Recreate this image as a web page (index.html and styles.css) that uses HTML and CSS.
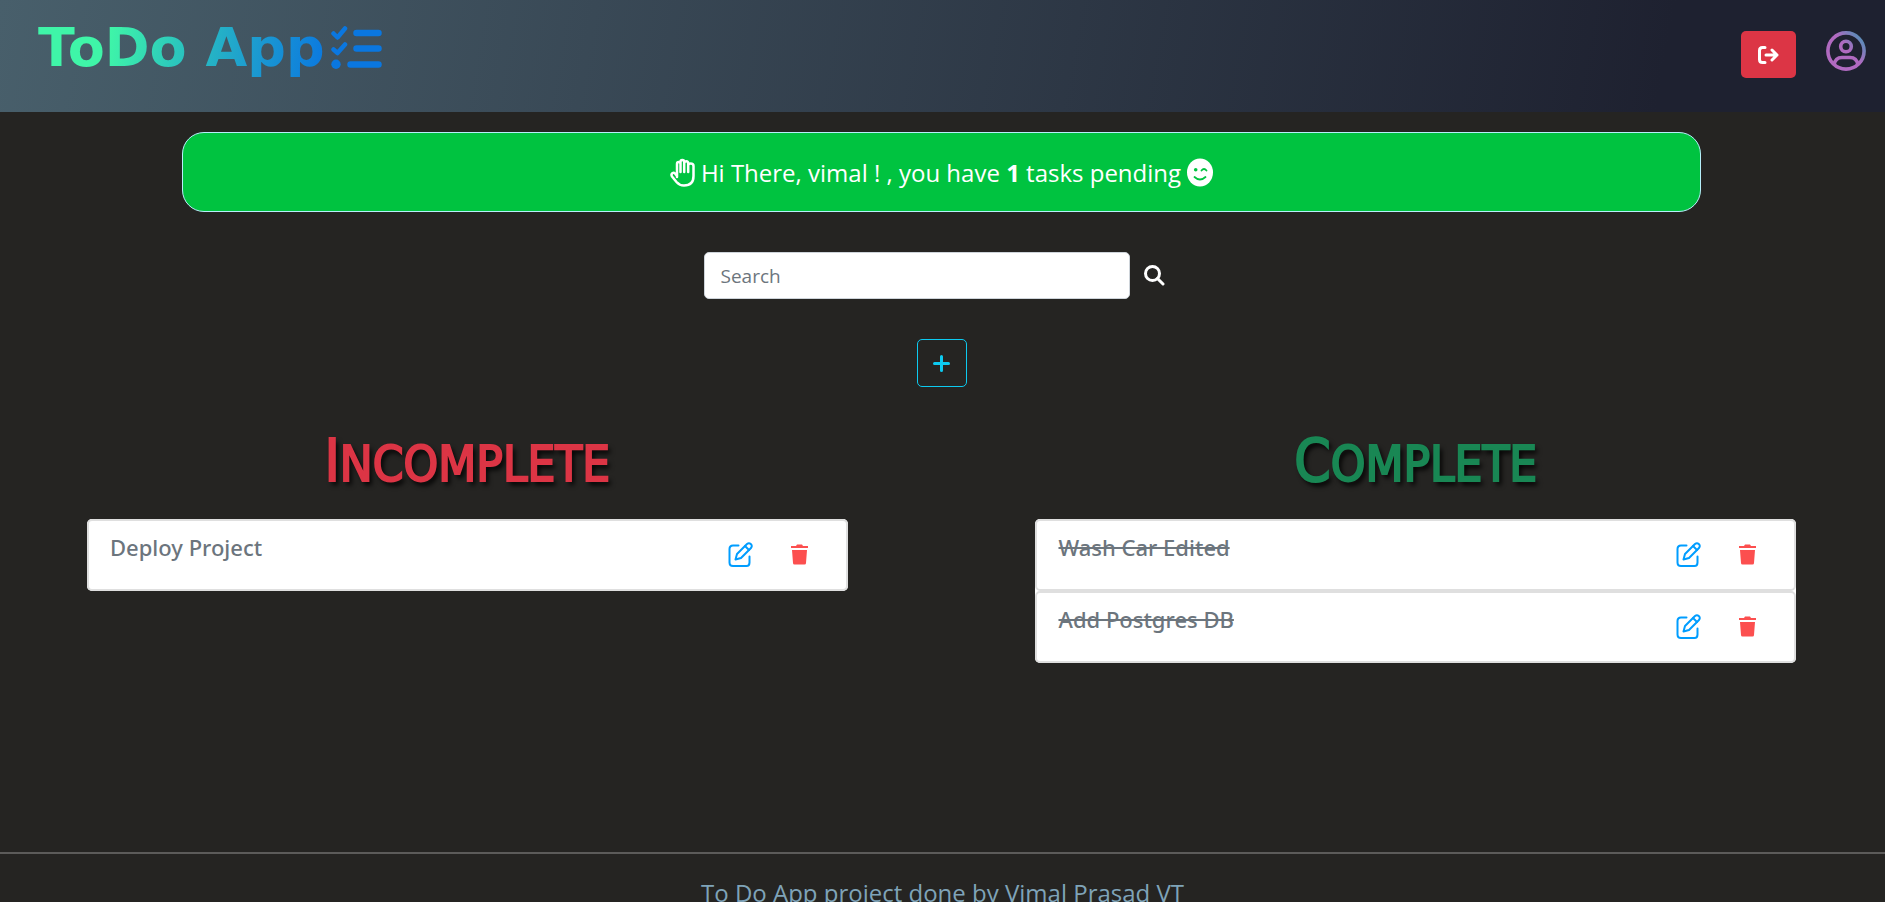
FILE: index.html
```html
<!DOCTYPE html>
<html lang="en">
<head>
<meta charset="utf-8">
<title>ToDo App</title>
<link rel="stylesheet" href="styles.css">
</head>
<body>
<svg class="sprite" aria-hidden="true">
  <symbol id="edit" viewBox="0 0 25 25">
    <g fill="none" stroke="currentColor" stroke-width="2" stroke-linecap="round" stroke-linejoin="round">
      <path d="M10.500 3.500H5Q1.500 3.500 1.500 7V20.500Q1.500 24 5 24H18.500Q21.500 24 21.500 20.500V14.500"/>
      <path d="M7.500 17.500L9 12L19 2Q21 .500 23 2.200Q24.500 4 23 6L13 16Z"/>
      <path d="M17 4L21 8"/>
    </g>
  </symbol>
  <symbol id="trash" viewBox="0 0 17 21">
    <path fill="currentColor" d="M0 2H5L6 .500H11L12 2H17V4H0ZM1 6H16L15 19Q15 20.500 13.500 20.500H3.500Q2 20.500 2 19Z"/>
  </symbol>
</svg>

<header class="navbar">
  <a class="brand" href="#"><span class="brand-text">ToDo App</span><svg class="brand-icon" viewBox="0 0 51 43" aria-hidden="true">
    <g fill="none" stroke="#0a77e0" stroke-linecap="round" stroke-linejoin="round">
      <path stroke-width="4.500" d="M2.500 7.500L6.500 11.500L14 2.500M2.500 23.500L6.500 27L14 18.500"/>
      <path stroke-width="6.500" d="M25.500 7H47.500M25.500 22.500H47.500M19.500 38.500H47.500"/>
    </g>
    <circle cx="5" cy="38.300" r="4.700" fill="#0a77e0"/>
  </svg></a>
  <div class="nav-actions">
    <button class="logout" type="button" aria-label="Log out">
      <svg width="21" height="18" viewBox="0 0 21 18" fill="none" stroke="#fff" stroke-width="3" stroke-linecap="round" stroke-linejoin="round"><path d="M7 1.500H4.500Q1.500 1.500 1.500 4.500V13.500Q1.500 16.500 4.500 16.500H7M8 9H19M14 4L19 9L14 14"/></svg>
    </button>
    <a class="profile" href="#" aria-label="Profile">
      <svg width="40" height="40" viewBox="0 0 40 40" fill="none" stroke="url(#violet)" stroke-width="3.600">
        <defs><linearGradient id="violet" gradientUnits="userSpaceOnUse" x1="10" y1="30" x2="36" y2="8"><stop offset=".5" stop-color="#b06ac0"/><stop offset="1" stop-color="#5a8cb8"/></linearGradient></defs>
        <circle cx="20" cy="20" r="18.100"/><circle cx="20" cy="15.500" r="5.300"/><path d="M8 34C9 28 13 26.500 16 26.500H24C27 26.500 31 28 32 34"/>
      </svg>
    </a>
  </div>
</header>

<main>
  <p class="banner">
    <svg width="25" height="29" viewBox="0 0 25 29" fill="none" stroke="#fff" stroke-width="2.500" stroke-linecap="round" stroke-linejoin="round" aria-hidden="true"><path d="M7 19V6Q7 4 8.700 4Q10.500 4 10.500 6V4Q10.500 2 12.300 2Q14.200 2 14.200 4V5Q14.500 3.200 16.300 3.200Q18.200 3.200 18.200 5.500V7Q18.700 5.500 20.500 5.500Q23.500 5.500 23.500 8V18Q23.500 27.500 14 27.500Q9.500 27.500 6.500 24L2 18.500Q.800 16.500 2.300 15.200Q3.800 14.200 5 15.500L7 18M10.500 6V14M14.200 5V14M18.200 7V14"/></svg>
    <span>Hi There, vimal ! , you have <strong>1</strong> tasks pending</span>
    <svg width="26" height="29" viewBox="0 0 26 29" aria-hidden="true"><ellipse cx="13" cy="14.500" rx="13" ry="14" fill="#fff"/><circle cx="8.700" cy="11.700" r="1.800" fill="#00c340"/><path d="M14.500 12.500Q17 9.500 19.500 12.500M7.500 19Q13 24 18.500 19" fill="none" stroke="#00c340" stroke-width="1.800" stroke-linecap="round"/></svg>
  </p>

  <form class="search">
    <input type="search" placeholder="Search" aria-label="Search">
    <button type="button" aria-label="Search tasks">
      <svg width="21" height="21" viewBox="0 0 21 21" fill="none" stroke="#fff" stroke-width="3" stroke-linecap="round"><circle cx="8.500" cy="8.500" r="7"/><path d="M13.500 13.500L19 19"/></svg>
    </button>
  </form>

  <button class="add" type="button" aria-label="Add task">
    <svg width="17" height="17" viewBox="0 0 17 17" stroke="#0dcaf0" stroke-width="3" stroke-linecap="round"><path d="M8.500 1.500V15.500M1.500 8.500H15.500"/></svg>
  </button>

  <div class="columns">
    <section>
      <h2 class="incomplete">Incomplete</h2>
      <ul class="tasks">
        <li><span class="task">Deploy Project</span>
          <button class="edit" type="button" aria-label="Edit"><svg width="25" height="25"><use href="#edit"/></svg></button>
          <button class="delete" type="button" aria-label="Delete"><svg width="17" height="21"><use href="#trash"/></svg></button></li>
      </ul>
    </section>
    <section>
      <h2 class="complete">Complete</h2>
      <ul class="tasks">
        <li><span class="task done">Wash Car Edited</span>
          <button class="edit" type="button" aria-label="Edit"><svg width="25" height="25"><use href="#edit"/></svg></button>
          <button class="delete" type="button" aria-label="Delete"><svg width="17" height="21"><use href="#trash"/></svg></button></li>
        <li><span class="task done">Add Postgres DB</span>
          <button class="edit" type="button" aria-label="Edit"><svg width="25" height="25"><use href="#edit"/></svg></button>
          <button class="delete" type="button" aria-label="Delete"><svg width="17" height="21"><use href="#trash"/></svg></button></li>
      </ul>
    </section>
  </div>
</main>

<footer>To Do App project done by Vimal Prasad VT</footer>
</body>
</html>
```

FILE: styles.css
```css
* { box-sizing: border-box; }
body {
  margin: 0;
  height: 100vh;
  overflow: hidden;
  display: flex;
  flex-direction: column;
  background: #252422;
  color: #fff;
  font-family: "Open Sans", "Noto Sans", sans-serif;
}
button { border: 0; padding: 0; background: none; cursor: pointer; }
svg { display: block; flex: none; }
.sprite { position: absolute; width: 0; height: 0; }

.navbar {
  flex: none;
  display: flex;
  justify-content: space-between;
  align-items: flex-start;
  min-height: 112px;
  padding: 16px 19px 0 38px;
  background: linear-gradient(100deg, #485f6b 0%, #1e2130 88%);
}
.brand { display: flex; gap: 6px; text-decoration: none; }
.brand-text {
  font: bold 54px/64px "DejaVu Sans", sans-serif;
  color: transparent;
  background: linear-gradient(100deg, #3ff5a8 25%, #2cc8bc 48%, #1e9fce 72%, #0a77e0 100%);
  background-clip: text;
  -webkit-background-clip: text;
}
.brand-icon { width: 51px; height: 43px; margin-top: 10px; }
.nav-actions { display: flex; gap: 30px; padding-top: 15px; }
.logout {
  display: grid;
  place-items: center;
  width: 55px;
  height: 47px;
  border-radius: 5px;
  background: #dc3545;
}

main { flex: none; padding: 20px 2px 0 0; }
.banner {
  display: flex;
  justify-content: center;
  align-items: center;
  gap: 6px;
  width: calc(83.333% - 50px);
  min-height: 80px;
  margin: 0 auto;
  border: 1px solid #b6effb;
  border-radius: 22px;
  background: #00c340;
  font-size: 24px;
}
.search { display: flex; justify-content: center; margin-top: 40px; }
.search input {
  width: 426px;
  height: 47px;
  padding: 0 16px;
  border: 1px solid #ced4da;
  border-radius: 5px;
  background: #fff;
  font: 19px "Open Sans", sans-serif;
}
.search input::placeholder { color: #6c757d; }
.search button { width: 50px; display: grid; place-items: center; }
.add {
  display: grid;
  place-items: center;
  width: 50px;
  height: 48px;
  margin: 40px auto 0;
  border: 1px solid #0dcaf0;
  border-radius: 5px;
}

.columns {
  display: grid;
  grid-template-columns: 1fr 1fr;
  gap: 11%;
  padding: 0 87px;
  margin-top: 32px;
}
h2 {
  margin: 0 0 20px;
  height: 80px;
  text-align: center;
  text-transform: uppercase;
  font: 49px/84px "DejaVu Sans Condensed", "DejaVu Sans", sans-serif;
  -webkit-text-stroke: 2px currentColor;
  text-shadow: 3px 4px 5px #000;
}
h2::first-letter { font-size: 58px; }
.incomplete { color: #dc3545; }
.complete { color: #198754; }
.tasks { list-style: none; margin: 0; padding: 0; border-radius: 5px; background: #fff; }
.tasks li {
  display: flex;
  min-height: 72px;
  padding: 9px 38px 0 21px;
  border: 2px solid #dfdfdf;
  border-radius: 5px;
}
.task { flex: 1; font: 500 22px/34px "Noto Sans", sans-serif; color: #6c757d; }
.done { text-decoration: line-through 2px; }
.edit, .delete { align-self: flex-start; padding-top: 12px; }
.edit { color: #009dff; margin-right: 38px; }
.delete { color: #fc4f4f; padding-top: 14px; }

footer {
  flex: none;
  margin-top: 189px;
  padding-top: 20px;
  border-top: 2px solid #5c5b5a;
  text-align: center;
  font-size: 24px;
  line-height: 38px;
  color: #7fa3b8;
}
```
